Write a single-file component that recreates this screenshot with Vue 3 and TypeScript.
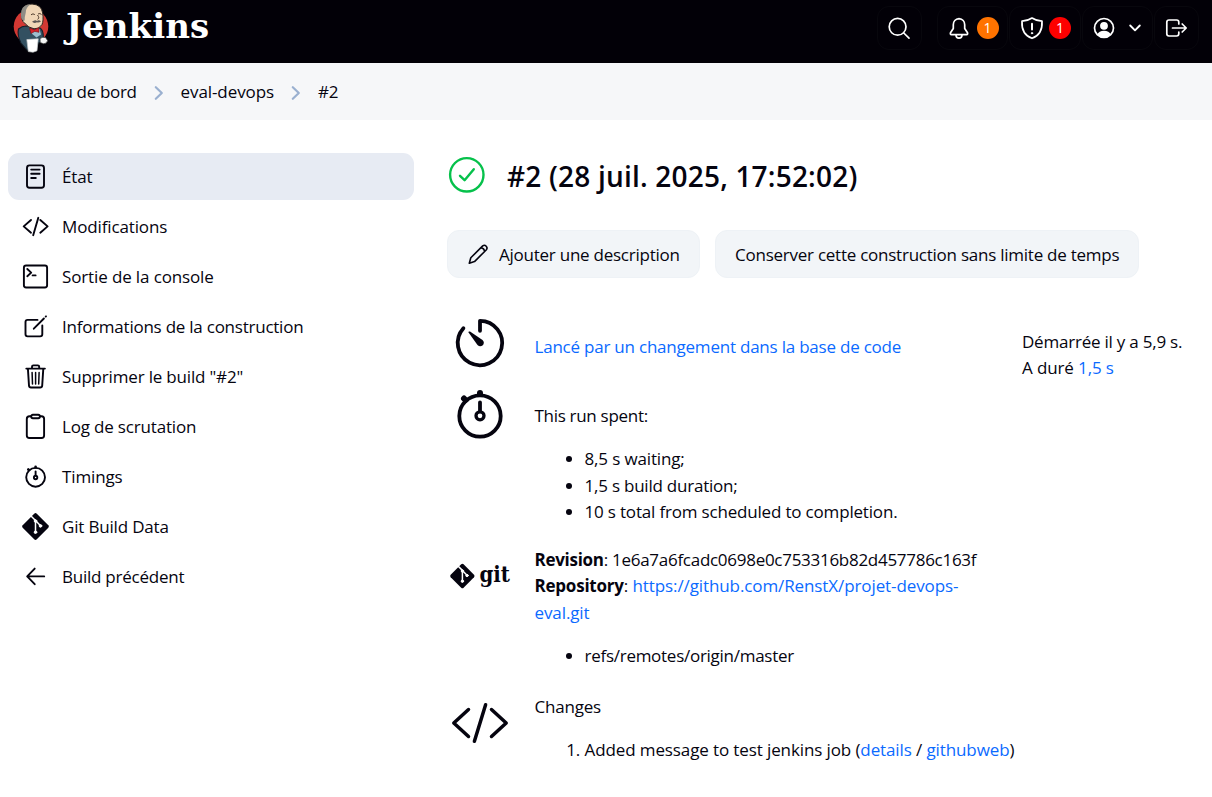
<script setup lang="ts">
interface Task {
  id: string
  label: string
  active?: boolean
}

const tasks: Task[] = [
  { id: 'status', label: 'État', active: true },
  { id: 'changes', label: 'Modifications' },
  { id: 'console', label: 'Sortie de la console' },
  { id: 'edit', label: 'Informations de la construction' },
  { id: 'delete', label: 'Supprimer le build "#2"' },
  { id: 'polling', label: 'Log de scrutation' },
  { id: 'timings', label: 'Timings' },
  { id: 'git', label: 'Git Build Data' },
  { id: 'previous', label: 'Build précédent' },
]

const timings: string[] = [
  '8,5 s waiting;',
  '1,5 s build duration;',
  '10 s total from scheduled to completion.',
]
</script>

<template>
  <div class="page">
    <header class="topbar">
      <a class="brand">
        <svg class="butler" width="40" height="54" viewBox="11 1 40 54">
          <circle cx="31" cy="26.500" r="17.300" fill="#d33833" />
          <path d="M18.500 29 Q22 26 26 26 L40 28 Q43.500 30 43.300 37.500 L42 42 L38 43 L36 50 L27 50 L21 43 Q17 35 18.500 29Z" fill="#335061" stroke="#14202a" stroke-width="1.100" />
          <path d="M21.500 17 Q20 4.500 32 4 Q41.500 4.500 42.700 13 Q43.700 21 42 24.500 Q39 29.500 34 28.800 Q28 27.500 25.500 24 Q22 22 21.500 17Z" fill="#f0d6b7" stroke="#2b2420" stroke-width="1" />
          <path d="M21.200 18 Q20 8.500 25 5.800 Q28.500 3.800 31 4.300 Q25.800 7 25.800 12.500 L24.800 17 Q25.200 20.500 23.700 21.500Z" fill="#8f8d86" />
          <path d="M31 14.800 Q33 13 34.800 14.600 M38 14 Q40 12.800 41.500 14.500 M37.500 15 Q40 18.300 37.500 19.300" fill="none" stroke="#4d3a2c" stroke-width="1" />
          <path d="M32 21.800 Q35 19.300 37 20.900 Q39 19.400 41 21.600 Q38.500 23 37 22.300 Q34 23.800 32 21.800Z" fill="#5c5654" />
          <path d="M33 31 L39.500 29 L41 34.500 L36.500 37.500 L31 33Z" fill="#9dbfd0" />
          <path d="M29.500 28 L34.500 29.800 L38.800 27.600 L39 32.300 L34.800 31.400 L31 33.500Z" fill="#d52129" stroke="#741116" stroke-width=".6" />
          <path d="M26.800 39.600 L38.200 38.800 L37 50.800 L33 52.200 L28.300 51.600Z" fill="#fff" stroke="#c5cacc" stroke-width=".7" />
          <path d="M40 38.500 Q42.500 36.600 45.500 37.500 L47.600 40.500 Q47 43.700 43.500 43.800 L40.200 42.500Z" fill="#f5f5f5" stroke="#333" stroke-width=".7" />
        </svg>
        <span class="wordmark">Jenkins</span>
      </a>
      <nav class="actions">
        <a class="action search">
          <svg width="24" height="24" viewBox="0 0 24 24" class="line"><circle cx="10.600" cy="10.800" r="8.400" /><path d="M16.800 17 L22 22.200" /></svg>
        </a>
        <a class="action notice">
          <svg width="24" height="24" viewBox="0 0 24 24" class="line"><path d="M12 2.600 C8.500 2.800 6.300 5.400 6.300 8.800 V12.500 L3.500 16.800 Q3 18.600 4.400 18.700 H19.600 Q21 18.600 20.500 16.800 L17.700 12.500 V8.800 C17.700 5.400 15.500 2.800 12 2.600Z" /><path d="M9 19 Q9 22.200 12 22.200 T15 19" /></svg>
          <span class="badge warn">1</span>
        </a>
        <a class="action notice">
          <svg width="24" height="24" viewBox="0 0 24 24" class="line"><path d="M12 2 Q7.500 5 2 5.200 C1.500 13.500 4.500 19.500 12 22.300 C19.500 19.500 22.500 13.500 22 5.200 Q16.500 5 12 2Z" /><path d="M12 7.800 V13.400" stroke-width="2" /><circle cx="12" cy="17.200" r=".7" fill="#fff" stroke-width="1" /></svg>
          <span class="badge danger">1</span>
        </a>
        <a class="action user">
          <svg width="24" height="24" viewBox="0 0 24 24"><circle cx="12" cy="12" r="9.500" fill="none" stroke="#fff" stroke-width="1.700" /><circle cx="12" cy="9.800" r="3.900" fill="#fff" /><path d="M5 18.800 Q7 14.800 12 14.800 T19 18.800 Q16 21.500 12 21.500 T5 18.800Z" fill="#fff" /></svg>
          <svg width="14" height="10" viewBox="0 0 14 10" class="line"><path d="M2.200 2.500 L7 7.300 L11.800 2.500" stroke-width="1.900" /></svg>
        </a>
        <a class="action exit">
          <svg width="24" height="24" viewBox="0 0 24 24" class="line"><path d="M14.800 8 V6.200 Q14.800 4 12.600 4 H5 Q2.800 4 2.800 6.200 V17.800 Q2.800 20 5 20 H12.600 Q14.800 20 14.800 17.800 V16" /><path d="M8.500 12 H22 M18.200 8 L22.200 12 L18.200 16" /></svg>
        </a>
      </nav>
    </header>

    <nav class="crumbs">
      <a class="c1">Tableau de bord</a>
      <svg width="10" height="16" viewBox="0 0 10 16"><path d="M1.800 2.200 L7.800 8 L1.800 13.800" /></svg>
      <a class="c2">eval-devops</a>
      <svg width="10" height="16" viewBox="0 0 10 16"><path d="M1.800 2.200 L7.800 8 L1.800 13.800" /></svg>
      <a class="c3">#2</a>
    </nav>

    <div class="body">
      <aside class="tasks">
        <a v-for="task in tasks" :key="task.id" class="task" :class="[task.id, { active: task.active }]">
          <svg width="32" height="31" viewBox="0 0 32 31">
            <template v-if="task.id === 'status'">
              <rect x="7" y="4.400" width="17" height="22.400" rx="2.500" />
              <path d="M11.200 8.600 H19.600 M11.200 12.800 H19.600 M11.200 17 H15.800" />
            </template>
            <path v-else-if="task.id === 'changes'" d="M11 9 L3.700 15.400 L11 21.700 M20.300 9 L27.600 15.400 L20.300 21.700 M18.300 6.800 L13.200 24.200" />
            <template v-else-if="task.id === 'console'">
              <rect x="3.900" y="4.500" width="23.200" height="22" rx="2.200" />
              <path d="M7.300 8 L11.200 11.600 L7.300 15.200 M12.600 14.400 H15.600" />
            </template>
            <template v-else-if="task.id === 'edit'">
              <path d="M17.500 8.900 H7.600 Q5.500 8.900 5.500 11 V23.300 Q5.500 25.400 7.600 25.400 H20.200 Q22.300 25.400 22.300 23.300 V14.500 M13.800 17.700 L23.900 7.500" />
              <path d="M25.700 5.600 L26 5.300" />
            </template>
            <template v-else-if="task.id === 'delete'">
              <path d="M6.300 7.600 H24.900 M7.900 7.600 L9 24.600 Q9.200 26.500 11 26.500 H20.200 Q22 26.500 22.200 24.600 L23.300 7.600 M12 7.500 V5.800 Q12 4.400 13.400 4.400 H17.800 Q19.200 4.400 19.200 5.800 V7.500" />
              <path d="M12.100 11.500 L12.500 23 M15.600 11.500 V23 M19.100 11.500 L18.700 23" class="thin" />
            </template>
            <template v-else-if="task.id === 'polling'">
              <path d="M11 5.300 H9.500 Q6.800 5.300 6.800 8 V24.500 Q6.800 27 9.500 27 H21.500 Q24.100 27 24.100 24.500 V8 Q24.100 5.300 21.500 5.300 H20" />
              <rect x="11.200" y="3.700" width="8.700" height="3.500" rx="1.700" />
            </template>
            <template v-else-if="task.id === 'timings'">
              <circle cx="15.600" cy="16.300" r="9.400" />
              <path d="M15.600 5.800 V6.500 M8.300 8.500 L9 9.200" stroke-width="2.600" />
              <path d="M15.600 10.500 V14.500" /><circle cx="15.600" cy="16.500" r="1.700" />
            </template>
            <template v-else-if="task.id === 'git'">
              <path d="M14.200 2.700 Q15.500 1.500 16.800 2.700 L28.300 14.200 Q29.500 15.500 28.300 16.800 L16.800 28.300 Q15.500 29.500 14.200 28.300 L2.700 16.800 Q1.500 15.500 2.700 14.200Z" fill="currentColor" stroke="none" />
              <g stroke="#fff" fill="#fff"><path d="M11.500 5.500 L15.500 9.500 V21 M16 10 L20.300 14.500" fill="none" stroke-width="1.500" /><circle cx="15.500" cy="10" r="1.300" stroke-width="1" /><circle cx="15.500" cy="21.200" r="1.300" stroke-width="1" /><circle cx="20.500" cy="14.900" r="1.300" stroke-width="1" /></g>
            </template>
            <path v-else d="M24.200 15.400 H7.300 M14.700 7.600 L7.200 15.400 L14.700 23.200" />
          </svg>
          <span>{{ task.label }}</span>
        </a>
      </aside>

      <main class="main">
        <div class="heading">
          <svg width="38" height="38" viewBox="0 0 38 38"><circle cx="18.800" cy="18.800" r="16.700" /><path d="M12 19.800 L16.600 24.200 L25.800 13.200" /></svg>
          <h1>#2 (28 juil. 2025, 17:52:02)</h1>
        </div>

        <div class="buttons">
          <button class="btn describe">
            <svg width="24" height="24" viewBox="0 0 24 24"><path d="M2.300 21.200 L3.800 15.800 L15.700 3.900 Q17.500 2.500 19.200 4.200 Q20.800 6 19.400 7.700 L7.500 19.600Z M13.900 5.700 Q17.200 6.100 17.700 9.400" /></svg>
            <span>Ajouter une description</span>
          </button>
          <button class="btn keep"><span>Conserver cette construction sans limite de temps</span></button>
        </div>

        <div class="details">
          <section class="summary">
            <div class="row cause">
              <svg width="64" height="64" viewBox="0 0 64 64" class="big">
                <path d="M15.400 17.200 A22.200 22.200 0 1 0 32 9.800 V19.800" />
                <path d="M20.200 21 Q21 20 22 20.600 L34.500 29 Q37 31.500 34.800 34.300 Q32 36.500 29.500 34Z" fill="currentColor" stroke="none" />
              </svg>
              <p><a class="link">Lancé par un changement dans la base de code</a></p>
            </div>

            <div class="row spent">
              <svg width="64" height="64" viewBox="0 0 64 64" class="big">
                <circle cx="32" cy="34" r="20.700" />
                <path d="M32 11 V12 M16 16.500 L17.500 18" stroke-width="6" />
                <path d="M32 20.500 V29" /><circle cx="32" cy="33.800" r="4" stroke-width="3.300" />
              </svg>
              <div>
                <p class="spent-title">This run spent:</p>
                <ul><li v-for="(timing, i) in timings" :key="timing" :class="`time-${i}`"><span>{{ timing }}</span></li></ul>
              </div>
            </div>

            <div class="row scm">
              <svg width="64" height="64" viewBox="0 0 64 64" class="big">
                <path d="M13.200 19.300 Q14.400 18.200 15.600 19.300 L26 29.800 Q27.100 31 26 32.200 L15.600 42.700 Q14.400 43.800 13.200 42.700 L2.700 32.200 Q1.600 31 2.700 29.800Z" fill="currentColor" stroke="none" />
                <g stroke="#fff" fill="#fff"><path d="M10.500 21.500 L14.400 25.400 V36.500 M14.400 25.500 L19 30.200" fill="none" stroke-width="1.500" /><circle cx="14.400" cy="26" r="1.200" stroke-width="1" /><circle cx="14.400" cy="36.200" r="1.200" stroke-width="1" /><circle cx="19" cy="30.500" r="1.200" stroke-width="1" /></g>
                <text x="31.500" y="36.700" textLength="30.500" lengthAdjust="spacingAndGlyphs" class="git-word">git</text>
              </svg>
              <div>
                <p class="rev"><b>Revision</b>: 1e6a7a6fcadc0698e0c753316b82d457786c163f</p>
                <p class="repo"><b>Repository</b>: <a class="link">https://github.com/RenstX/projet-devops-<br />eval.git</a></p>
                <ul class="refs"><li class="ref"><span>refs/remotes/origin/master</span></li></ul>
              </div>
            </div>

            <div class="row log">
              <svg width="64" height="64" viewBox="0 0 64 64" class="big code">
                <path d="M20.500 18.500 L5.800 32 L20.500 45.500 M43.500 18.500 L58.200 32 L43.500 45.500 M37.600 13.700 L26.400 50.300" />
              </svg>
              <div>
                <p class="changes-title">Changes</p>
                <ol><li class="commit"><span>Added message to test jenkins job (<a class="link">details</a> / <a class="link">githubweb</a>)</span></li></ol>
              </div>
            </div>
          </section>

          <aside class="when">
            <p class="started">Démarrée il y a 5,9 s.</p>
            <p class="took">A duré <a class="link">1,5 s</a></p>
          </aside>
        </div>
      </main>
    </div>
  </div>
</template>

<style>
body {
  margin: 0;
  background: #fff;
}
</style>

<style scoped>
.page {
  width: 1212px;
  height: 797px;
  overflow: hidden;
  font: 17px/26.5px "Open Sans", "Noto Sans", sans-serif;
  color: #05040f;
}
p,
ul,
ol,
h1 {
  margin: 0;
}
svg {
  flex: none;
  display: block;
  overflow: visible;
}
span,
a,
p,
h1 {
  white-space: nowrap;
}
.topbar {
  height: 63px;
  background: #020007;
  display: flex;
  justify-content: space-between;
  align-items: flex-start;
  color: #fff;
}
.brand {
  display: flex;
  padding: 1px 0 0 11px;
  gap: 15px;
}
.wordmark {
  font: bold 34px/50px "DejaVu Serif", serif;
  letter-spacing: 0.05px;
}
.actions {
  display: flex;
  gap: 1px;
  padding: 6px 13px 0 0;
}
.action {
  box-sizing: border-box;
  width: 71.5px;
  height: 44px;
  border: 1px solid #08070d;
  border-radius: 12px;
  display: flex;
  align-items: center;
  padding-left: 9.5px;
}
.action.search {
  width: 45px;
  margin-right: 14px;
}
.action.exit {
  width: 45px;
  padding-left: 9px;
}
.line {
  fill: none;
  stroke: #fff;
  stroke-width: 1.7;
  stroke-linecap: round;
  stroke-linejoin: round;
}
.notice {
  gap: 5.5px;
}
.user {
  gap: 12px;
}
.badge {
  width: 22px;
  height: 22px;
  border-radius: 50%;
  font-size: 14px;
  line-height: 22px;
  text-align: center;
}
.warn {
  background: #ff7300;
}
.danger {
  background: #fd0000;
}
.crumbs {
  height: 57px;
  box-sizing: border-box;
  background: #f6f7f9;
  display: flex;
  align-items: center;
  padding: 2px 0 0 12px;
  gap: 17px;
}
.crumbs svg {
  fill: none;
  stroke: #9ab0d0;
  stroke-width: 2.2;
  stroke-linecap: round;
  stroke-linejoin: round;
}
.c1 {
  letter-spacing: -0.34px;
}
.c2 {
  letter-spacing: -0.09px;
}
.c3 {
  letter-spacing: -0.2px;
}
.body {
  display: flex;
  padding: 33px 0 0 8px;
}
.tasks {
  width: 406px;
  display: flex;
  flex-direction: column;
  gap: 3px;
}
.task {
  height: 47px;
  border-radius: 11px;
  display: flex;
  align-items: center;
  gap: 10px;
  padding-left: 12px;
  letter-spacing: -0.18px;
}
.task.active {
  background: #e7ebf3;
}
.task span {
  padding-top: 2px;
}
.task.changes,
.task.timings,
.task.console {
  letter-spacing: -0.13px;
}
.task.edit,
.task.previous {
  letter-spacing: -0.24px;
}
.task svg {
  fill: none;
  stroke: currentColor;
  stroke-width: 1.9;
  stroke-linecap: round;
  stroke-linejoin: round;
}
.task .thin {
  stroke-width: 1.5;
}
.main {
  margin-left: 33px;
  flex: 1;
}
.heading {
  display: flex;
  align-items: center;
  gap: 21px;
  height: 48px;
  padding-left: 1px;
}
.heading svg {
  fill: none;
  stroke: #06c14b;
  stroke-width: 2.4;
  stroke-linecap: round;
  stroke-linejoin: round;
  margin-bottom: 4px;
}
h1 {
  font-size: 28px;
  font-weight: 600;
  line-height: 40px;
  letter-spacing: 0.2px;
  padding-bottom: 2px;
}
.buttons {
  display: flex;
  gap: 15px;
  margin-top: 29px;
}
.btn {
  box-sizing: border-box;
  height: 48px;
  border: 1px solid #eef2f6;
  border-radius: 12px;
  background: #f2f5f8;
  color: inherit;
  font: inherit;
  letter-spacing: -0.245px;
  display: flex;
  align-items: center;
  padding: 0 0 0 19px;
}
.btn span {
  padding-top: 2px;
}
.describe {
  width: 253px;
  gap: 8px;
}
.describe svg {
  fill: none;
  stroke: currentColor;
  stroke-width: 1.6;
  stroke-linejoin: round;
}
.keep {
  width: 424px;
}
.details {
  display: flex;
  margin-top: 33px;
}
.summary {
  width: 575px;
}
.row {
  display: flex;
  gap: 22.5px;
  padding-left: 1px;
}
.cause {
  height: 71px;
}
.cause p {
  margin-top: 23px;
  letter-spacing: -0.22px;
}
.spent {
  height: 163px;
}
.spent-title {
  margin-top: 21px;
  letter-spacing: -0.3px;
}
.time-0 {
  letter-spacing: -0.14px;
}
.time-1 {
  letter-spacing: -0.22px;
}
.time-2 {
  letter-spacing: -0.18px;
}
.scm {
  height: 146px;
}
.rev {
  margin-top: 2px;
  letter-spacing: -0.28px;
}
.repo {
  margin-top: -0.6px;
  line-height: 26.8px;
  letter-spacing: -0.1px;
}
.repo b {
  letter-spacing: -0.22px;
}
.ref {
  letter-spacing: -0.27px;
}
.changes-title {
  margin-top: 3px;
  letter-spacing: -0.2px;
}
.commit {
  letter-spacing: -0.11px;
}
.big {
  color: #05040f;
  fill: none;
  stroke: currentColor;
  stroke-width: 3.8;
  stroke-linecap: round;
  stroke-linejoin: round;
}
.code {
  stroke-width: 3.5;
}
.git-word {
  font: bold 23px "DejaVu Serif", serif;
  fill: currentColor;
  stroke: none;
}
ul,
ol {
  padding-left: 50px;
  margin-top: 16.5px;
}
.refs {
  margin-top: 16.5px;
}
.link {
  color: #0b6aff;
}
.when {
  margin-top: 18px;
  line-height: 26px;
  letter-spacing: -0.22px;
}
.took {
  letter-spacing: -0.12px;
}
</style>
